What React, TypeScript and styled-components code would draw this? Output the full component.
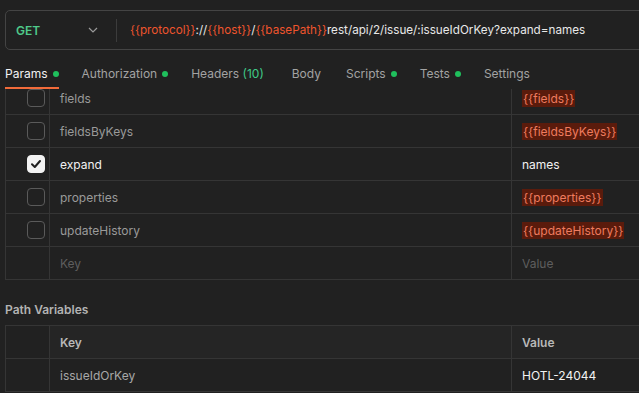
import React, { useLayoutEffect, useRef } from 'react'
import styled, { createGlobalStyle } from 'styled-components'

const GlobalStyle = createGlobalStyle`
  html, body {
    margin: 0;
    padding: 0;
    background: #212121;
  }
  body {
    font-family: Inter, "Noto Sans", sans-serif;
    font-size: 12px;
    color: #e6e6e6;
  }
`

const Page = styled.div`
  width: 639px;
  height: 393px;
  overflow: hidden;
  display: flex;
  flex-direction: column;
  padding-left: 5px;
  box-sizing: border-box;
`

const UrlBar = styled.div`
  margin-top: 10px;
  margin-right: -20px;
  height: 40px;
  display: flex;
  align-items: center;
  border: 1px solid #444444;
  border-radius: 5px;
  box-sizing: border-box;
  flex-shrink: 0;
`

const Method = styled.div`
  width: 110px;
  display: flex;
  align-items: center;
  justify-content: space-between;
  padding: 0 18px 0 10px;
  box-sizing: border-box;
  color: #4fc98a;
  font-weight: 600;
  font-size: 12px;
`

const Divider = styled.div`
  width: 1px;
  height: 23px;
  background: #3c3c3c;
`

const Url = styled.div`
  padding-left: 13px;
  white-space: nowrap;
  color: #e8e8e8;
  font-size: 11.7px;
`

const Var = styled.span`
  color: #f0552d;
`

const Tabs = styled.div`
  margin-top: 10px;
  height: 29px;
  display: flex;
  gap: 23px;
  flex-shrink: 0;
`

const Tab = styled.div<{ $active?: boolean; $space?: number }>`
  display: flex;
  align-items: center;
  gap: 5px;
  height: 100%;
  box-sizing: border-box;
  margin-right: ${(p) => p.$space ?? 0}px;
  color: ${(p) => (p.$active ? '#f2f2f2' : '#a3a3a3')};
  font-size: 12px;
  border-bottom: 2px solid ${(p) => (p.$active ? '#f26b3a' : 'transparent')};
  white-space: nowrap;
`

const Dot = styled.span`
  width: 6px;
  height: 6px;
  border-radius: 50%;
  background: #1fbf5c;
`

const Count = styled.span`
  color: #3fc987;
`

const ScrollArea = styled.div`
  flex: 1;
  overflow: hidden;
  margin-right: -20px;
  padding-bottom: 30px;
`

const Table = styled.div`
  border-left: 1px solid #353535;
  border-top: 1px solid #353535;
`

const Row = styled.div`
  display: grid;
  grid-template-columns: 44px 462px 1fr;
  height: 33px;
  box-sizing: border-box;
  border-bottom: 1px solid #353535;
`

const CheckCell = styled.div`
  display: flex;
  align-items: center;
  justify-content: flex-end;
  padding-right: 4px;
  border-right: 1px solid #353535;
`

const Cell = styled.div<{ $header?: boolean; $value?: boolean }>`
  display: flex;
  align-items: center;
  padding-left: 10px;
  box-sizing: border-box;
  background: ${(p) => (p.$header ? '#252525' : 'transparent')};
  border-right: ${(p) => (p.$value ? 'none' : '1px solid #353535')};
  white-space: nowrap;
`

const Text = styled.span<{ $tone: 'on' | 'off' | 'placeholder' | 'header' | 'key' }>`
  font-size: 12px;
  font-weight: ${(p) => (p.$tone === 'header' ? 600 : 400)};
  color: ${(p) =>
    p.$tone === 'on'
      ? '#f2f2f2'
      : p.$tone === 'off'
      ? '#9a9a9a'
      : p.$tone === 'placeholder'
      ? '#5e5e5e'
      : p.$tone === 'header'
      ? '#b8b8b8'
      : '#a8a8a8'};
`

const VarValue = styled.span`
  background: #5a1b0c;
  color: #ef7c5f;
  padding: 1px 1px;
  font-size: 12px;
`

const Box = styled.div<{ $checked?: boolean }>`
  width: 18px;
  height: 18px;
  box-sizing: border-box;
  border-radius: 4px;
  border: 1px solid ${(p) => (p.$checked ? '#f2f2f2' : '#5a5a5a')};
  background: ${(p) => (p.$checked ? '#f2f2f2' : 'transparent')};
  display: flex;
  align-items: center;
  justify-content: center;
`

const SectionTitle = styled.div`
  margin-top: 22px;
  height: 23px;
  font-size: 12px;
  font-weight: 600;
  color: #b3b3b3;
`

type Param = { key: string; value: string; checked: boolean }

const params: Param[] = [
  { key: 'fields', value: '{{fields}}', checked: false },
  { key: 'fieldsByKeys', value: '{{fieldsByKeys}}', checked: false },
  { key: 'expand', value: 'names', checked: true },
  { key: 'properties', value: '{{properties}}', checked: false },
  { key: 'updateHistory', value: '{{updateHistory}}', checked: false },
]

const Check = () => (
  <svg width="12" height="12" viewBox="0 0 12 12">
    <path d="M2 6.3 L4.8 9 L10 3" fill="none" stroke="#1e1e1e" strokeWidth="2" strokeLinecap="round" strokeLinejoin="round" />
  </svg>
)

const Chevron = () => (
  <svg width="10" height="6" viewBox="0 0 10 6">
    <path d="M1 1 L5 5 L9 1" fill="none" stroke="#9a9a9a" strokeWidth="1.2" />
  </svg>
)

const App = () => {
  const scrollRef = useRef<HTMLDivElement>(null)

  useLayoutEffect(() => {
    if (scrollRef.current) scrollRef.current.scrollTop = 8
  }, [])

  return (
    <>
      <GlobalStyle />
      <Page>
        <UrlBar>
          <Method>
            GET
            <Chevron />
          </Method>
          <Divider />
          <Url>
            <Var>{'{{protocol}}'}</Var>://<Var>{'{{host}}'}</Var>/<Var>{'{{basePath}}'}</Var>
            rest/api/2/issue/:issueIdOrKey?expand=names
          </Url>
        </UrlBar>

        <Tabs>
          <Tab $active>
            Params <Dot />
          </Tab>
          <Tab>
            Authorization <Dot />
          </Tab>
          <Tab $space={5}>
            <span>
              Headers <Count>(10)</Count>
            </span>
          </Tab>
          <Tab $space={2}>Body</Tab>
          <Tab>
            Scripts <Dot />
          </Tab>
          <Tab>
            Tests <Dot />
          </Tab>
          <Tab>Settings</Tab>
        </Tabs>

        <ScrollArea ref={scrollRef}>
          <Table>
            {params.map((p) => (
              <Row key={p.key}>
                <CheckCell>
                  <Box $checked={p.checked}>{p.checked && <Check />}</Box>
                </CheckCell>
                <Cell>
                  <Text $tone={p.checked ? 'on' : 'off'}>{p.key}</Text>
                </Cell>
                <Cell $value>
                  {p.value.startsWith('{{') ? <VarValue>{p.value}</VarValue> : <Text $tone="on">{p.value}</Text>}
                </Cell>
              </Row>
            ))}
            <Row>
              <CheckCell />
              <Cell>
                <Text $tone="placeholder">Key</Text>
              </Cell>
              <Cell $value>
                <Text $tone="placeholder">Value</Text>
              </Cell>
            </Row>
          </Table>

          <SectionTitle>Path Variables</SectionTitle>

          <Table>
            <Row>
              <CheckCell />
              <Cell $header>
                <Text $tone="header">Key</Text>
              </Cell>
              <Cell $header $value>
                <Text $tone="header">Value</Text>
              </Cell>
            </Row>
            <Row>
              <CheckCell />
              <Cell>
                <Text $tone="key">issueIdOrKey</Text>
              </Cell>
              <Cell $value>
                <Text $tone="on">HOTL-24044</Text>
              </Cell>
            </Row>
          </Table>
        </ScrollArea>
      </Page>
    </>
  )
}

export default App
